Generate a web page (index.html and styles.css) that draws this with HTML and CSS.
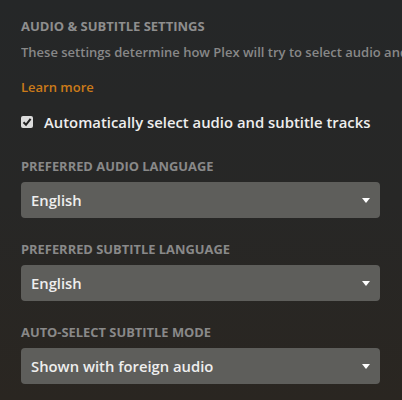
FILE: index.html
```html
<!DOCTYPE html>
<html>
<head>
<meta charset="utf-8">
<link rel="stylesheet" href="styles.css">
</head>
<body>
<div class="page">
  <h2 class="section-title">AUDIO &amp; SUBTITLE SETTINGS</h2>
  <p class="desc">These settings determine how Plex will try to select audio and subtitle tracks.</p>
  <a class="learn">Learn more</a>
  <label class="check-row">
    <span class="checkbox"><svg width="10" height="10" viewBox="0 0 10 10"><path d="M1.5 5.2 L4 7.8 L8.6 1.8" fill="none" stroke="#222" stroke-width="2"/></svg></span>
    <span class="check-label">Automatically select audio and subtitle tracks</span>
  </label>
  <div class="field">
    <div class="field-label">PREFERRED AUDIO LANGUAGE</div>
    <div class="select"><span>English</span><span class="caret"></span></div>
  </div>
  <div class="field">
    <div class="field-label">PREFERRED SUBTITLE LANGUAGE</div>
    <div class="select"><span>English</span><span class="caret"></span></div>
  </div>
  <div class="field">
    <div class="field-label">AUTO-SELECT SUBTITLE MODE</div>
    <div class="select"><span>Shown with foreign audio</span><span class="caret"></span></div>
  </div>
</div>
</body>
</html>
```

FILE: styles.css
```css
html, body {
  margin: 0;
  padding: 0;
  height: 100%;
}
body {
  background: linear-gradient(180deg, #252728 0%, #272726 50%, #2a2621 100%);
  font-family: "Open Sans", "DejaVu Sans", sans-serif;
  overflow: hidden;
}
.page {
  padding: 18px 0 0 21px;
  width: 359px;
}
.section-title {
  margin: 0;
  font-size: 13px;
  line-height: 16px;
  font-weight: 700;
  color: #8e8e8e;
}
.desc {
  margin: 9px 0 0 0;
  font-size: 13px;
  line-height: 18px;
  font-weight: 600;
  color: #888888;
  white-space: nowrap;
  width: 381px;
  overflow: hidden;
}
.learn {
  display: block;
  margin-top: 17px;
  font-size: 13px;
  line-height: 18px;
  font-weight: 600;
  color: #cc7b19;
}
.check-row {
  display: flex;
  align-items: center;
  margin-top: 16px;
  height: 20px;
}
.checkbox {
  width: 12px;
  height: 12px;
  background: #dcdcdc;
  border-radius: 2px;
  display: flex;
  align-items: center;
  justify-content: center;
  margin-right: 11px;
}
.check-label {
  font-size: 14.85px;
  line-height: 20px;
  font-weight: 600;
  color: #eeeeee;
}
.field {
  margin-top: 23px;
}
.check-row + .field {
  margin-top: 26px;
}
.field-label {
  font-size: 12.9px;
  line-height: 16px;
  font-weight: 700;
  color: #898989;
}
.select {
  margin-top: 8px;
  height: 36px;
  background: #5e5e5b;
  border-radius: 4px;
  display: flex;
  align-items: center;
  justify-content: space-between;
  padding: 0 10px 0 10px;
  font-size: 14.8px;
  font-weight: 600;
  color: #eeeeee;
}
.caret {
  width: 0;
  height: 0;
  border-left: 4px solid transparent;
  border-right: 4px solid transparent;
  border-top: 5px solid #ffffff;
}
```
